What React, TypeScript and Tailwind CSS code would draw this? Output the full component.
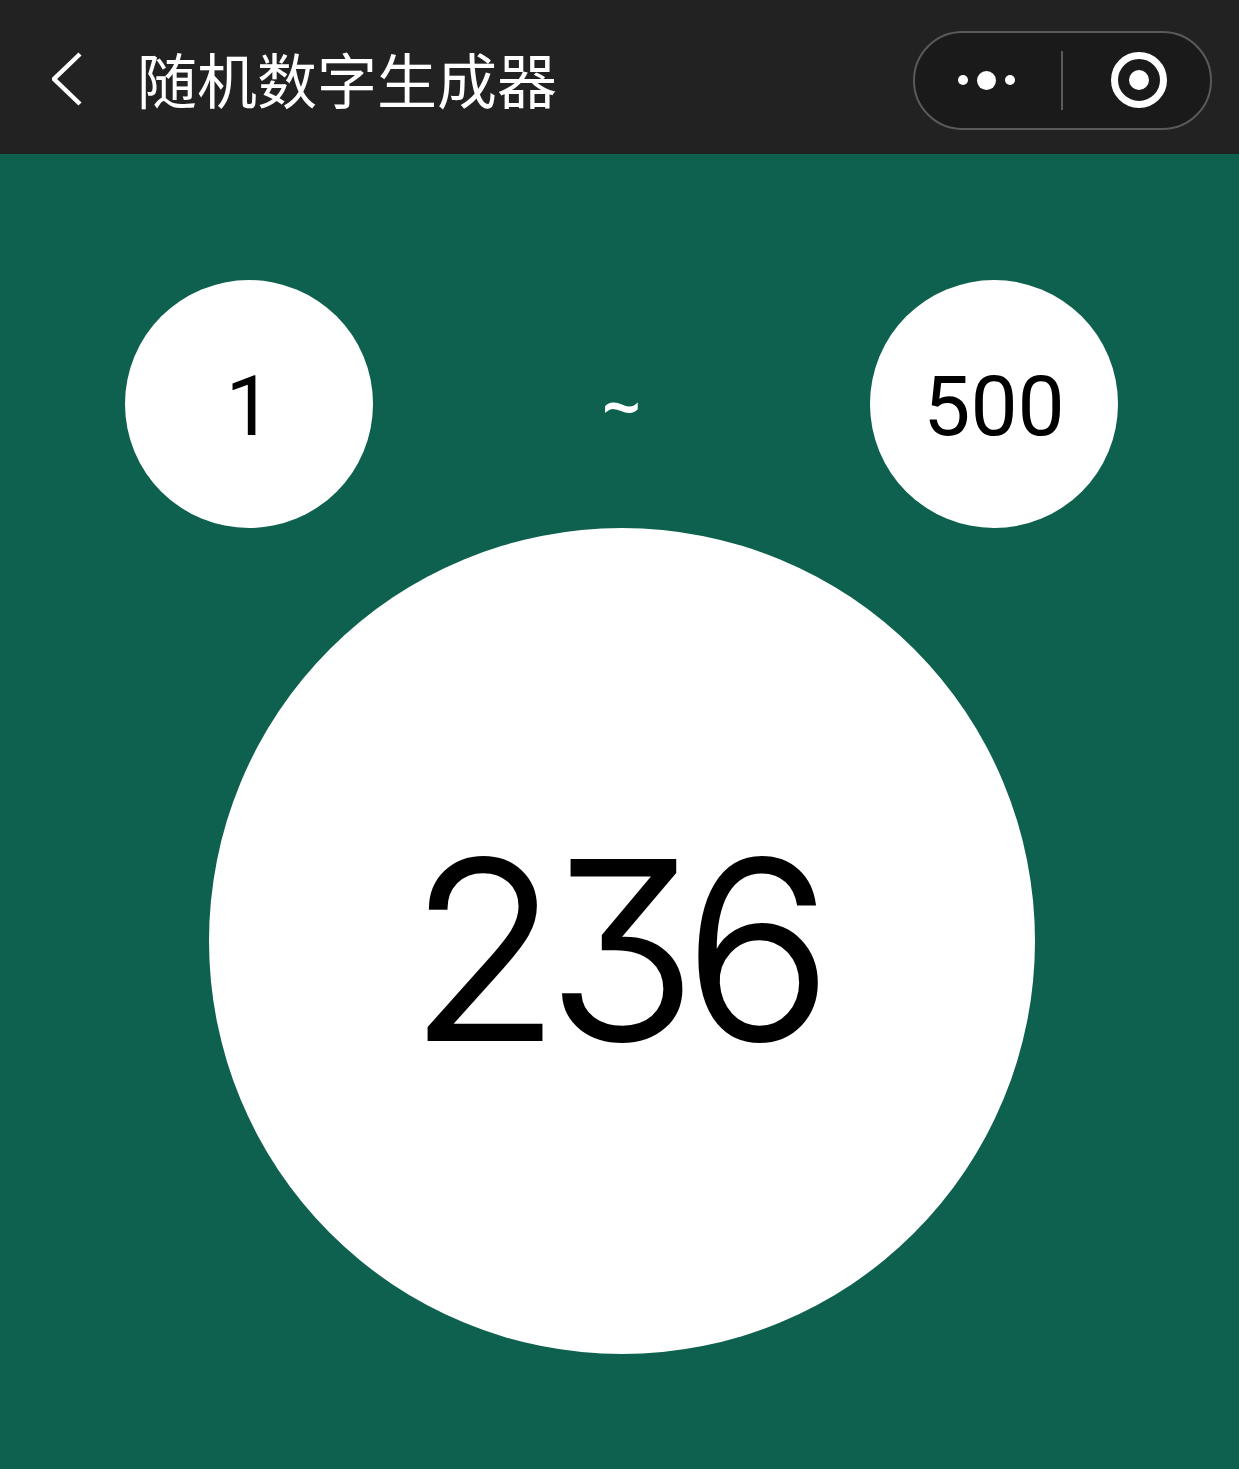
export default function App() {
  return (
    <div className="min-h-[1469px] bg-[#0e614e] font-['Roboto','Noto_Sans_CJK_SC',sans-serif] text-black">
      <header className="flex h-[154px] items-center justify-between bg-[#222222] pl-[52px] pr-[27px]">
        <div className="flex items-center pt-[3px]">
          <svg width="32" height="54" viewBox="0 0 32 54" fill="none" stroke="white" strokeWidth="4.5">
            <path d="M28 2 L2 27 L28 52" />
          </svg>
          <h1 className="-mt-[2px] ml-[53px] font-['Noto_Sans_CJK_SC',sans-serif] text-[60px] leading-none text-white">
            随机数字生成器
          </h1>
        </div>
        <div className="mt-[6px] flex h-[99px] w-[299px] items-center rounded-full border-2 border-[#5a5a5a] bg-[#1a1a1a]">
          <div className="flex w-[146px] items-center justify-center gap-[9px] pr-[4px]">
            <span className="h-[10px] w-[10px] rounded-full bg-white" />
            <span className="h-[19px] w-[19px] rounded-full bg-white" />
            <span className="h-[10px] w-[10px] rounded-full bg-white" />
          </div>
          <div className="h-[59px] w-[2px] bg-[#5a5a5a]" />
          <div className="flex flex-1 items-center justify-center pl-[4px]">
            <span className="flex h-[56px] w-[56px] items-center justify-center rounded-full border-[7px] border-white">
              <span className="h-[20px] w-[20px] rounded-full bg-white" />
            </span>
          </div>
        </div>
      </header>

      <main className="pt-[126px]">
        <div className="flex items-center justify-between pl-[125px] pr-[121px]">
          <div className="flex h-[248px] w-[248px] items-center justify-center rounded-full bg-white pt-[5px] text-[84px] leading-none">
            1
          </div>
          <span className="pt-[4px] font-['Noto_Sans',sans-serif] text-[68px] font-semibold leading-none text-white">~</span>
          <div className="flex h-[248px] w-[248px] items-center justify-center rounded-full bg-white pt-[5px] text-[84px] leading-none">
            500
          </div>
        </div>
        <div className="ml-[209px] flex h-[826px] w-[826px] items-center justify-center rounded-full bg-white pr-[17px] pt-[18px] font-['Inter',sans-serif] text-[248px] font-light leading-none tracking-[-14px] [-webkit-text-stroke:2px_black] [font-feature-settings:'cv09']">
          236
        </div>
      </main>
    </div>
  );
}
